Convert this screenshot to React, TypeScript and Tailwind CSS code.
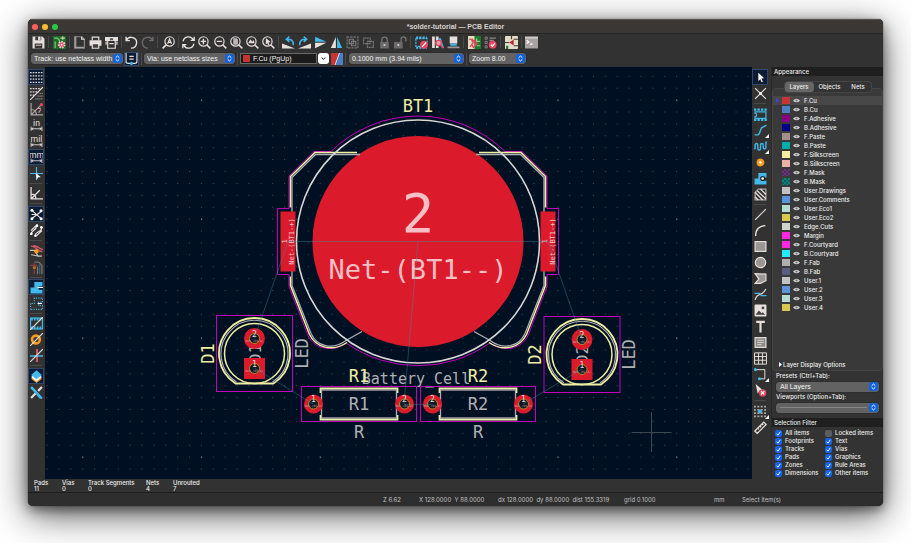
import type { ReactNode } from "react";

const INK = "#e6dfdc";
const BLUE = "#42b8eb";
const DIM = "#6b6969";

/* ---------- shared pieces ---------- */

function Glyph({ children }: { children: ReactNode }) {
  return (
    <svg viewBox="0 0 12 12" className="size-[13px]" fill="none" stroke={INK} strokeWidth="1.1" aria-hidden="true">
      {children}
    </svg>
  );
}

type Tool = { label: string; art?: ReactNode; active?: boolean; more?: boolean; sep?: "s" | "l" };

function ToolButton({ tool }: { tool: Tool }) {
  return (
    <button
      type="button"
      aria-label={tool.label}
      className={
        "relative flex size-4 shrink-0 items-center justify-center " +
        (tool.active ? "bg-[#0d1b33] outline outline-1 -outline-offset-1 outline-[#30486c]" : "")
      }
    >
      <Glyph>{tool.art}</Glyph>
      {tool.more && (
        <svg viewBox="0 0 4 4" className="absolute -right-px bottom-0 size-1" aria-hidden="true">
          <path d="M4 0V4H0Z" fill="#fff" />
        </svg>
      )}
    </button>
  );
}

function HSep({ large }: { large?: boolean }) {
  return (
    <span className={"flex h-4 shrink-0 justify-center py-0.5 " + (large ? "w-[5px]" : "w-1")}>
      <span className="w-px bg-[#4a4a4a]" />
    </span>
  );
}

function VSep({ large }: { large?: boolean }) {
  return (
    <span className={"flex w-4 shrink-0 items-center px-0.5 " + (large ? "h-[5px]" : "h-1")}>
      <span className="h-px w-full bg-[#4a4a4a]" />
    </span>
  );
}

function Chevrons() {
  return (
    <span className="pointer-events-none absolute inset-y-0 right-px flex items-center">
      <svg viewBox="0 0 9 9" className="size-[9px]" fill="none" stroke="#fff" aria-hidden="true">
        <rect width="9" height="9" rx="2" fill="#1263dc" stroke="none" />
        <path d="M2.7 3.7 4.5 2 6.3 3.7M2.7 5.3 4.5 7 6.3 5.3" />
      </svg>
    </span>
  );
}

function Picker({ label, value, width }: { label: string; value: string; width: string }) {
  return (
    <span className={"relative flex h-[11px] " + width}>
      <select
        aria-label={label}
        className="h-full w-full appearance-none rounded-[3px] bg-[#626262] pl-[3px] font-['Liberation_Sans',sans-serif] text-[7px] leading-[11px] text-[#f4f4f4] shadow-[0_0_1px_#000]"
      >
        <option>{value}</option>
      </select>
      <Chevrons />
    </span>
  );
}

/* ---------- tool artwork ---------- */

const lens = <path d="M8 8 11.4 11.4" strokeWidth="1.4" />;
const chipArt = (
  <>
    <rect x="0.8" y="2.5" width="10.4" height="7" stroke={BLUE} strokeDasharray="2 1" />
    <path d="M1 1.5H11M1 10.7H11" stroke={BLUE} strokeWidth="2" strokeDasharray="2 1" />
  </>
);
const padlock = <rect x="2" y="5.5" width="8" height="6" fill={DIM} stroke="none" />;
const zoneShape = "M.5 11.5V6H4V1H11.5V5H8V8H11.5V11.5Z";

const topTools: Tool[] = [
  {
    label: "Save",
    art: (
      <>
        <path d="M.5.5H9.5L11.5 2.5V11.5H.5Z" fill={INK} stroke="none" />
        <path d="M3 .5H8.5V4H3ZM2.5 7H9.5V11.5H2.5Z" fill="#3a3838" stroke="none" />
        <path d="M6 1H7.5V3.5H6ZM3.5 8.5H8.5" fill={INK} strokeWidth=".8" />
      </>
    ),
  },
  {
    label: "Board Setup",
    sep: "l",
    art: (
      <>
        <rect width="12" height="12" fill="#1f6b2a" stroke="none" />
        <path d="M1 2H4L6 4V8M2 5V11M9 0V4" stroke="#7fc47d" />
        <path d="M7 2H11" stroke="#e2d7a5" />
        <circle cx="8" cy="8" r="2.6" fill="#e8536b" stroke="#f0c5ca" strokeWidth="1.8" strokeDasharray="1.4 .9" />
        <circle cx="8" cy="8" r="1.6" fill="#e8536b" stroke="none" />
        <circle cx="8" cy="8" r=".8" fill="#fff" stroke="none" />
      </>
    ),
  },
  { label: "Page Settings", sep: "s", art: <><path d="M1.5.7H8L10.5 3V11.3H1.5Z" stroke="#8b8785" /><path d="M2.5.5V11M1.5 10.5H10" stroke="#a9a3a1" /><path d="M8 .7V3H10.5" stroke={INK} /></> },
  { label: "Print", art: <><path d="M3 4V1H9V4" /><path d="M.5 4H11.5V9H.5Z" fill={INK} stroke="none" /><path d="M3 7H9V11.3H3Z" fill="#444" /></> },
  { label: "Plot", art: <><path d="M0 1H12V4.5H0Z" fill={INK} stroke="none" /><path d="M2.5 4V11.3H9.5V4M1 8V5M11 8V5M4 7H8" /><path d="M4.5 2H7.5V4H4.5Z" fill="#555" stroke="none" /></> },
  { label: "Undo", sep: "s", art: <path d="M1 .8V4.3H4.5M1.2 4A5 5 0 1 1 5.5 11.2" strokeWidth="1.3" /> },
  { label: "Redo", art: <path d="M11 .8V4.3H7.5M10.8 4A5 5 0 1 0 6.5 11.2" strokeWidth="1.3" stroke={DIM} /> },
  { label: "Find", sep: "l", art: <><circle cx="7" cy="5" r="4.3" /><path d="M3.8 8.2.6 11.4" strokeWidth="1.6" /><path d="M5.2 7.2 7 2.8 8.8 7.2M5.8 5.8H8.2" /></> },
  { label: "Refresh", sep: "s", art: <path d="M1 5A5 5 0 0 1 10.5 3.8M11.3.8V4H8M11 7A5 5 0 0 1 1.5 8.2M.7 11.2V8H4" strokeWidth="1.2" /> },
  { label: "Zoom In", art: <><circle cx="5" cy="5" r="4.3" />{lens}<path d="M2.5 5H7.5M5 2.5V7.5" strokeWidth="1.3" /></> },
  { label: "Zoom Out", art: <><circle cx="5" cy="5" r="4.3" />{lens}<path d="M2.5 5H7.5" strokeWidth="1.3" /></> },
  { label: "Zoom to Page", art: <><circle cx="5" cy="5" r="4.3" />{lens}<path d="M3 2H6L7.3 3.3V8H3Z" fill="#bdb6b3" stroke="none" /></> },
  { label: "Zoom to Objects", art: <><circle cx="5" cy="5" r="4.3" />{lens}<path d="M2 6.8 4.2 3 5.6 5.2 7 3.8 8 6.8Z" fill={INK} stroke="none" /></> },
  { label: "Zoom to Selection", art: <><circle cx="5" cy="5" r="4.3" />{lens}<path d="M3.5 1.8 8 5.5 6 6 7 8.2 5.7 8.5 5 6.6 3.5 7.8Z" fill={INK} stroke="none" /></> },
  { label: "Rotate Counterclockwise", sep: "s", art: <><path d="M0 11.5V7L12 11.5Z" fill={INK} stroke="none" /><path d="M10.5 8.5C10.5 4 8 2.5 4.5 3M6.8.6 4 3 6.8 5.4" stroke={BLUE} strokeWidth="1.4" /></> },
  { label: "Rotate Clockwise", art: <><path d="M12 11.5V7L0 11.5Z" fill={INK} stroke="none" /><path d="M1.5 8.5C1.5 4 4 2.5 7.5 3M5.2.6 8 3 5.2 5.4" stroke={BLUE} strokeWidth="1.4" /></> },
  { label: "Mirror Vertically", art: <><path d="M1 .8V5.4H11.5Z" fill={BLUE} stroke="none" /><path d="M1 11.2V6.2H11.5Z" fill={INK} stroke="none" /></> },
  { label: "Mirror Horizontally", art: <><path d="M.8 11H5.4V1Z" fill={INK} stroke="none" /><path d="M11.2 11H6.6V1Z" fill={BLUE} stroke="none" /></> },
  { label: "Group", art: <g stroke="#777"><rect x="1" y="1" width="10" height="10" strokeDasharray="2 1" /><path d="M3 3H7V7H3ZM5 5H9V9H5Z" /></g> },
  { label: "Ungroup", art: <g stroke="#777"><path d="M1.5 2H7.5V7H1.5ZM5 5H10.5V10.5H5Z" strokeDasharray="2 .7" /></g> },
  { label: "Lock", art: <>{padlock}<path d="M3.5 6V3.5A2.5 2.5 0 0 1 8.5 3.5V6" stroke="#777" strokeWidth="1.2" /><circle cx="6" cy="8.3" r="1" fill="#ccc" stroke="none" /></> },
  { label: "Unlock", art: <><rect x="0" y="5.5" width="8" height="6" fill={DIM} stroke="none" /><path d="M6.5 6V3A2.2 2.2 0 0 1 11 3V5" stroke="#777" strokeWidth="1.2" /><circle cx="4" cy="8.3" r="1" fill="#ccc" stroke="none" /></> },
  { label: "Footprint Editor", sep: "l", art: <>{chipArt}<circle cx="8.3" cy="8" r="3.6" fill="#e84560" stroke="none" /><path d="M6.5 10 10.3 6" stroke="#fff" /></> },
  { label: "Footprint Browser", art: <><path d="M1 .5H3.5V11H1ZM4.5.5H7V11H4.5Z" fill={INK} stroke="none" /><path d="M8 2 11 11" stroke={BLUE} strokeWidth="2" /><circle cx="7" cy="6.5" r="2.5" fill="#f0a0ac" stroke="#e84560" /><path d="M9 8.5 11.5 11.3" stroke="#e84560" strokeWidth="1.4" /></> },
  { label: "3D Viewer", art: <><path d="M2.5.5H9.5V7H2.5Z" fill={INK} stroke="none" /><path d="M3 8H9" stroke={BLUE} strokeWidth="2" /><path d="M.5 10.5H11.5" stroke="#999" strokeWidth="1.4" /></> },
  {
    label: "Update PCB from Schematic",
    sep: "l",
    art: (
      <>
        <rect width="7" height="12" fill="#e4dcc0" stroke="none" />
        <rect x="6" width="6" height="12" fill="#1f7a2d" stroke="none" />
        <path d="M1 3H4V6" stroke="#b9483f" />
        <path d="M8 2V5H11M8 9H11" stroke="#8fd08c" />
        <path d="M2 10 6 4.5M6.5 7.5V4H3M3 7.5 5 10.5 9 6" stroke="#e84560" strokeWidth="1.3" />
      </>
    ),
  },
  { label: "Design Rules Checker", art: <><path d="M1 1H3V3H1ZM1 5H3V7H1ZM1 9H3V11H1Z" stroke="#8d8987" strokeWidth=".8" /><path d="M5 2H11M5 4H9" stroke="#8d8987" /><circle cx="8" cy="8" r="3.6" fill="#e84560" stroke="none" /><path d="M6.300 8 7.600 9.500 10 6.700" stroke="#fff" /></> },
  { label: "Schematic Editor", sep: "l", art: <><rect width="12" height="12" rx="1" fill="#e4dcc8" stroke="none" /><path d="M0 6H4M8 3H12M8 9H12M6 0V3" stroke="#3d3a38" /><path d="M4 6 8 3.2V8.8Z" fill="#b72a2f" stroke="none" /><path d="M2 9V12" stroke="#237a2c" strokeWidth="2" /></> },
  { label: "Scripting Console", sep: "s", art: <><rect x="0" y=".5" width="12" height="11" fill="#a8a3a1" stroke="none" /><path d="M0 1.500H12" stroke="#d0cac8" strokeWidth="1.5" /><path d="M1.5 4 3.5 5.5 1.5 7M4.5 7.5H7" stroke="#fff" /></> },
];

const unitText = (t: string) => (
  <>
    <text x="6" y="6.5" textAnchor="middle" fontSize="8" fill={INK} stroke="none" fontFamily="Roboto, sans-serif">
      {t}
    </text>
    <path d="M1 9H11M1 7V11M11 7V11M3 8 1.6 9 3 10M9 8 10.4 9 9 10" strokeWidth=".8" />
  </>
);

const leftTools: Tool[] = [
  { label: "Show Grid", active: true, art: <path d="M0 1.5H12M0 4.5H12M0 7.5H12M0 10.5H12" strokeDasharray="1.5 1" /> },
  { label: "Grid Overrides", art: <><path d="M0 1.5H11M0 4.5H8M0 7.5H5" strokeDasharray="1.5 1" /><path d="M0 12 12 0" /><path d="M5 11H12M7 8.5H12M9 6H12" stroke="#9b9694" strokeDasharray="1 .8" /></> },
  { label: "Polar Coordinates", art: <><path d="M1 0V11H12M1 11 10 2M1 6C4 6 6 8 6 11" stroke="#aaa5a3" /><circle cx="10.5" cy="1.5" r="1.5" fill="#e84560" stroke="none" /><path d="M7 5H10M8 9 10 6" stroke="#d8909a" /></> },
  { label: "Inches", art: unitText("in") },
  { label: "Mils", art: unitText("mil") },
  { label: "Millimeters", active: true, art: unitText("mm") },
  { label: "Full Crosshair", art: <><path d="M6 0V12M0 6H12" stroke={BLUE} /><path d="M5.2 5.2 10 9.4H7.6L6.3 11.5Z" fill="#fff" stroke="none" /></> },
  { label: "45 Degree Limit", sep: "s", art: <path d="M1 0V11H12M1 11 9 3M1 6.5C4 6.5 5.5 8 5.5 11" strokeWidth="1.2" /> },
  { label: "Show Ratsnest", sep: "l", active: true, art: <><path d="M1.5 2 10.5 10M1.5 10 10.5 3M5.5 6H1.5" /><g fill="#fff" stroke="none"><circle cx="1.8" cy="2" r="1.4" /><circle cx="10.2" cy="2.5" r="1.4" /><circle cx="1.8" cy="10" r="1.4" /><circle cx="10.3" cy="10" r="1.4" /></g></> },
  { label: "Curved Ratsnest", art: <><path d="M1 10C0 6 7 6 6 1M5 11C4 7 11 8 11 3M1 6 6 1M6 11 11 6" /><g fill="#fff" stroke="none"><circle cx="6.5" cy="1.5" r="1.2" /><circle cx="10.5" cy="3" r="1.2" /><circle cx="1.3" cy="9" r="1.2" /><circle cx="5" cy="10.8" r="1.2" /></g></> },
  { label: "Highlight Nets", sep: "l", art: <><path d="M1 1C6 1 6 6 11.5 6M3 .5C8 1 8 4 12 4" stroke="#d65868" strokeWidth="1.3" /><path d="M0 5H4L8 11M1 9C5 9 6 11 11 10" stroke="#c7c0bd" /><circle cx="6" cy="6" r="2" fill="#f59b1e" stroke="none" /></> },
  { label: "Net Colors", art: <><path d="M0 4H7M4 2V12" stroke="#8a3a43" strokeWidth="1.2" /><path d="M4 1H8L11 4V12M7 5V12" stroke="#777371" strokeWidth="1.2" /><path d="M9 3V12" stroke="#2f6a86" /><circle cx="4" cy="6" r="1.5" fill="#bb6c1a" stroke="none" /></> },
  { label: "Filled Zones", sep: "s", active: true, art: <><path d={zoneShape} fill={BLUE} stroke="none" /><path d="M7 6H12" stroke="#fff" /></> },
  { label: "Zone Outlines", art: <><path d={zoneShape} stroke={BLUE} strokeDasharray="1 1.2" /><path d="M7 6H11" stroke="#fff" /></> },
  { label: "Outline Footprints", sep: "s", art: <><rect x=".5" y="1" width="11" height="10" stroke={BLUE} /><path d="M1 2H11M1 10H11" stroke={BLUE} strokeWidth="2.5" strokeDasharray="1.6 1" /><path d="M0 12 12 0" /></> },
  { label: "Outline Vias", art: <><circle cx="5.5" cy="6" r="3.6" stroke="#f59b1e" strokeWidth="2.4" /><path d="M0 12 12 0" /></> },
  { label: "Outline Tracks", art: <><path d="M6.5 0V12" stroke="#d65868" strokeWidth="1.8" /><path d="M0 6.5H12" stroke={BLUE} strokeWidth="1.4" /><path d="M0 12 12 0" /></> },
  { label: "High Contrast", sep: "l", active: true, art: <><path d="M6 4.5 11 8 6 12 1 8Z" fill="#f59b1e" stroke="none" /><path d="M6 2.5 11 6.5 6 10.5 1 6.5Z" fill="#fff" stroke="none" /><path d="M6 .3 11 4.5 6 8.5 1 4.5Z" fill={BLUE} stroke="none" /></> },
  { label: "Preferences", art: <><path d="M1 1 4 4 10 11" stroke={BLUE} strokeWidth="2.4" /><path d="M11 1 7.5 4.5M5 7 1 11" stroke={INK} strokeWidth="2" /><path d="M7 8 11 11.5" stroke={BLUE} strokeWidth="2" /></> },
];

const rightTools: Tool[] = [
  { label: "Select", active: true, art: <path d="M4 1.500 9.300 6.600 6.900 6.900 8.200 9.900 7 10.400 5.800 7.500 4 9.200Z" fill="#fff" stroke="none" /> },
  { label: "Local Ratsnest", art: <><path d="M1 1 11 11M11 1 1 11" /><circle cx="6" cy="6" r="1.2" fill="#fff" stroke="none" /></> },
  { label: "Add Footprint", sep: "l", art: <><path d="M1 3.5H11V9.5H1V8A1.5 1.5 0 0 0 1 5Z" stroke={BLUE} /><path d="M0 1.5H12M0 11H12" stroke={BLUE} strokeWidth="2" strokeDasharray="2.2 1" /></> },
  { label: "Route Tracks", more: true, art: <path d="M.5 10H3.500C6 10 5.500 3 8 3L11.500 1" stroke={BLUE} strokeWidth="1.3" /> },
  { label: "Tune Length", more: true, art: <path d="M0 8H1V4.5A1.2 1.2 0 0 1 3.5 4.5V8A1.2 1.2 0 0 0 6 8V4.5A1.2 1.2 0 0 1 8.5 4.5V7A1.2 1.2 0 0 0 11 7V2H12" stroke={BLUE} strokeWidth="1.3" /> },
  { label: "Add Via", art: <circle cx="6" cy="6" r="2.4" fill="#fff" stroke="#f59b1e" strokeWidth="2.4" /> },
  { label: "Add Zone", art: <><path d={zoneShape} fill={BLUE} stroke="none" /><circle cx="8" cy="6" r="1.8" fill="#fff" stroke="#222" /></> },
  { label: "Add Rule Area", art: <><path d="M1 4 4 1H11V11H1Z" stroke="#aaa5a3" /><path d="M1 4 8 11M3 2.5 11 10M6 1 11 6M1 8 4 11" strokeWidth="1.2" /></> },
  { label: "Draw Line", sep: "s", art: <path d="M1 11 11 1" strokeWidth="1.1" /> },
  { label: "Draw Arc", art: <path d="M1.5 11C1.5 5 5 1.5 10.5 1.5" strokeWidth="1.3" /> },
  { label: "Draw Rectangle", art: <rect x="1" y="1.5" width="10" height="9" fill="#9a9694" /> },
  { label: "Draw Circle", art: <circle cx="6" cy="6" r="4.8" fill="#9a9694" /> },
  { label: "Draw Polygon", art: <path d="M1 1.5 11 2V8L6 10.5H1L4.5 6.5Z" fill="#9a9694" /> },
  { label: "Draw Bezier", art: <><path d="M1 11C3 3 7 9 11 1" /><path d="M.5 5H6M6 7H11.5" stroke={BLUE} /></> },
  { label: "Add Image", art: <><rect x=".5" y=".5" width="11" height="11" rx="1" fill={INK} stroke="none" /><path d="M1.5 10 4.5 6 7 8.5 8 7.5 10.5 10Z" fill="#444" stroke="none" /><circle cx="8.3" cy="3.6" r="1.3" fill="#444" stroke="none" /></> },
  { label: "Add Text", art: <path d="M2 1.800H10M6 1.800V11.500" strokeWidth="2" /> },
  { label: "Add Text Box", art: <><rect x="1" y="1.5" width="10" height="9" fill="#8d8987" /><path d="M3 4H9M3 6H9M3 8H7" strokeWidth=".8" /></> },
  { label: "Add Table", art: <path d="M.5.8H11.5V11.2H.5ZM.5 4.2H11.5M.5 7.6H11.5M4.2.8V11.2M7.8.8V11.2" strokeWidth=".9" /> },
  { label: "Add Dimension", more: true, art: <><path d="M1 1.5H10V10H5" strokeWidth=".9" /><circle cx="1.2" cy="1.5" r="1.4" fill={BLUE} stroke="none" /><circle cx="5" cy="10" r="1.4" fill={BLUE} stroke="none" /></> },
  { label: "Delete", art: <><path d="M1.5 0 8 5.5 5 6 3.5 9Z" fill={INK} stroke="none" /><circle cx="8" cy="8.2" r="3.4" fill="#e84560" stroke="none" /><path d="M6.5 6.7 9.5 9.7M9.5 6.7 6.5 9.7" stroke="#fff" /></> },
  { label: "Set Grid Origin", sep: "l", more: true, art: <><path d="M0 1.5H12M0 4.5H12M0 7.5H12M0 10.5H12" stroke="#aaa5a3" strokeWidth="1.8" strokeDasharray="1.8 1.3" /><circle cx="5.5" cy="6" r="1.9" fill={BLUE} stroke="none" /></> },
  { label: "Measure", art: <path d="M.8 9.3 9 1 11.2 3.2 3 11.4ZM3.5 6.6 4.6 7.7M5.5 4.6 6.6 5.7M7.4 2.6 8.5 3.7" strokeWidth="1.2" /> },
];

/* ---------- board drawing ---------- */

const SILK = "#f0eea1";
const FAB = "#afb0b4";
const YARD = "#c400c0";
const RED = "#db1b2b";
const BOARD = "#001023";
const MONO = "'DejaVu Sans Mono', monospace";

function RoundPad({ x, y, r, n, square }: { x: number; y: number; r: number; n: string; square?: boolean }) {
  return (
    <g>
      {square ? (
        <rect x={x - r} y={y - r} width={r * 2} height={r * 2} fill={RED} />
      ) : (
        <circle cx={x} cy={y} r={r} fill={RED} />
      )}
      <circle cx={x} cy={y} r="5" fill="#0b1a28" stroke="#b08a1c" strokeWidth="1" />
      <text x={x} y={y - 2} fontSize="8" fill="#f6dcdf" textAnchor="middle">{n}</text>
      <text x={x} y={y + 3} fontSize="3" fill="#d99aa4" textAnchor="middle">Net-(D1-A)</text>
    </g>
  );
}

function Resistor({ x, name, left, right }: { x: number; name: string; left: string; right: string }) {
  return (
    <g transform={`translate(${x} 404)`}>
      <rect x="-57.5" y="-17.5" width="115" height="35" fill="none" stroke={YARD} />
      <path d="M-38.5-11V-15.5H38.5V-11M-38.5 11V15.5H38.5V11" fill="none" stroke={SILK} strokeWidth="1.8" />
      <rect x="-37.5" y="-14" width="75" height="28" fill="none" stroke={FAB} strokeWidth="1.3" />
      <RoundPad x={-45.5} y={0} r={9.5} n={left} />
      <RoundPad x={45.5} y={0} r={9.5} n={right} />
      <text y="6" fontSize="17" fill={FAB} textAnchor="middle">{name}</text>
      <text y="34" fontSize="17" fill={FAB} textAnchor="middle">R</text>
      <text y="-22" fontSize="17" fill={SILK} textAnchor="middle">{name}</text>
    </g>
  );
}

function Led({ x, y, name }: { x: number; y: number; name: string }) {
  return (
    <g transform={`translate(${x} ${y})`}>
      <rect x="-38" y="-38" width="76" height="76" fill="none" stroke={YARD} />
      <path d="M-19 30A35.5 35.5 0 1 1 19 30Z" fill="none" stroke={SILK} strokeWidth="1.8" />
      <path d="M-18 28.5A33.5 33.5 0 1 1 18 28.5" fill="none" stroke={FAB} strokeWidth="1.2" />
      <circle r="30" fill="none" stroke={SILK} strokeWidth="1.5" />
      <text transform="translate(6 0) rotate(-90)" fontSize="16" fill={FAB} textAnchor="middle">{name}</text>
      <RoundPad x={0} y={-15} r={10.5} n="2" />
      <RoundPad x={0} y={15} r={10.5} n="1" square />
      <text transform="translate(-41 0) rotate(-90)" fontSize="17" fill={SILK} textAnchor="middle">{name}</text>
      <text transform="translate(53 0) rotate(-90)" fontSize="17" fill={FAB} textAnchor="middle">LED</text>
    </g>
  );
}

function HolderSide() {
  return (
    <g fill="none">
      <path d="M-87-90H-104L-129-65.5V-33H-140.5V33H-129V45L-110 94C-104 107-86 112-71 101" stroke={YARD} />
      <path d="M-58-87H-102.500L-126-64V44L-107 92C-101 105-86 109-72 99L-56 90" stroke={FAB} strokeWidth="1.3" />
      <path d="M-61-89H-103L-127.500-65V-34M-127.500 35V44L-108.500 93C-102 106-86 111-71 101" stroke={SILK} strokeWidth="1.5" />
      <rect x="-137.500" y="-30" width="15" height="60" fill={RED} />
    </g>
  );
}

function Board() {
  return (
    <svg
      viewBox="45 67 707 412"
      preserveAspectRatio="xMidYMid slice"
      className="block h-full w-full"
      role="img"
      aria-label="Board layout"
      fontFamily={MONO}
    >
      <defs>
        <pattern id="dots" x="46.500" y="75.800" width="11.880" height="11.900" patternUnits="userSpaceOnUse">
          <rect width="1" height="1" fill="#3c4856" />
        </pattern>
        <pattern id="dotsMajor" x="82.200" y="99.600" width="118.800" height="119" patternUnits="userSpaceOnUse">
          <rect width="1.200" height="1.200" fill="#7d8894" />
        </pattern>
      </defs>
      <rect x="-500" y="-500" width="2000" height="2000" fill={BOARD} />
      <rect x="-500" y="-500" width="2000" height="2000" fill="url(#dots)" />
      <rect x="-500" y="-500" width="2000" height="2000" fill="url(#dotsMajor)" />

      <path d="M651.500 412V452M631.500 432.500H671.500" stroke="#3c4754" />

      <g transform="translate(418 241.500)">
        <circle r="105.500" fill={RED} />
        <path d="M-87-90A124.500 124.500 0 0 1 87-90M-71 102A124.500 124.500 0 0 0 71 102" fill="none" stroke={YARD} />
        <HolderSide />
        <g transform="scale(-1 1)">
          <HolderSide />
        </g>
        <circle r="121.500" fill="none" stroke="#d8d9d6" strokeWidth="1.600" />
        <text y="-10" fontSize="54" fill="#f7bfc4" textAnchor="middle">2</text>
        <text y="37" fontSize="27" fill="#f7bfc4" textAnchor="middle">Net-(BT1--)</text>
        <text y="-130" fontSize="17" fill={SILK} textAnchor="middle">BT1</text>
        <text x="-2" y="142" fontSize="15" fill={FAB} textAnchor="middle">Battery_Cell</text>
        <g fontSize="7" fill="#f7c9cd" textAnchor="middle">
          <text transform="translate(-131 0) rotate(-90)">1</text>
          <text transform="translate(-124 0) rotate(-90)">Net-(BT1-+)</text>
          <text transform="translate(129 0) rotate(-90)">1</text>
          <text transform="translate(137 0) rotate(-90)">Net-(BT1-+)</text>
        </g>
      </g>

      <Led x={254.5} y={353.5} name="D1" />
      <Led x={582} y={354.5} name="D2" />
      <Resistor x={359} name="R1" left="1" right="2" />
      <Resistor x={478} name="R2" left="2" right="1" />

      <g stroke="#3f8f9c" strokeOpacity=".45" strokeWidth=".9">
        <path d="M288 241.500H548M418 241.500 404 404M288 241.500 254.500 338M548 241.500 582 339M254.500 368 313 404M523 404 582 369M404 404.500H432" />
      </g>
    </svg>
  );
}

/* ---------- appearance panel ---------- */

const layers: [string, string][] = [
  ["F.Cu", "bg-[#c83434]"],
  ["B.Cu", "bg-[#4d7fc4]"],
  ["F.Adhesive", "bg-[#840084]"],
  ["B.Adhesive", "bg-[#000084]"],
  ["F.Paste", "bg-[#a39189]"],
  ["B.Paste", "bg-[#00adad]"],
  ["F.Silkscreen", "bg-[#f2eda1]"],
  ["B.Silkscreen", "bg-[#e8b2a7]"],
  ["F.Mask", "bg-[repeating-conic-gradient(#6d3579_0_25%,#4b2a5c_0_50%)] bg-size-[4px_4px]"],
  ["B.Mask", "bg-[repeating-conic-gradient(#14807a_0_25%,#0d5f5b_0_50%)] bg-size-[4px_4px]"],
  ["User.Drawings", "bg-[#c2c2c2]"],
  ["User.Comments", "bg-[#5994dc]"],
  ["User.Eco1", "bg-[#b4dbd2]"],
  ["User.Eco2", "bg-[#d8c852]"],
  ["Edge.Cuts", "bg-[#d0d2cd]"],
  ["Margin", "bg-[#ff26e2]"],
  ["F.Courtyard", "bg-[#ff26e2]"],
  ["B.Courtyard", "bg-[#26e9ff]"],
  ["F.Fab", "bg-[#afafaf]"],
  ["B.Fab", "bg-[#585d84]"],
  ["User.1", "bg-[#c2c2c2]"],
  ["User.2", "bg-[#5994dc]"],
  ["User.3", "bg-[#b4dbd2]"],
  ["User.4", "bg-[#d8c852]"],
];

const filters: [string, boolean][] = [
  ["All items", true],
  ["Locked items", false],
  ["Footprints", true],
  ["Text", true],
  ["Tracks", true],
  ["Vias", true],
  ["Pads", true],
  ["Graphics", true],
  ["Zones", true],
  ["Rule Areas", true],
  ["Dimensions", true],
  ["Other items", true],
];

function PanelSelect({ id, label, value }: { id: string; label: string; value: string }) {
  return (
    <div className="px-1">
      <label htmlFor={id} className="block h-[10px] leading-[10px]">{label}</label>
      <span className="relative flex h-[11px] w-full items-center">
        <select
          id={id}
          className="h-[10px] w-full appearance-none rounded-[3px] bg-[#626262] pl-1 font-['Liberation_Sans',sans-serif] text-[7px] leading-[10px] text-[#f4f4f4] shadow-[0_0_1px_#000]"
        >
          <option>{value}</option>
        </select>
        {value === "" && <span className="pointer-events-none absolute right-3 left-1 h-px bg-[#858585]" />}
        <Chevrons />
      </span>
    </div>
  );
}

function Panel() {
  return (
    <aside className="flex w-28 shrink-0 flex-col border-l border-[#2a2a2a] bg-[#333] text-[6px] font-medium text-[#ececec]">
      <h2 className="h-[9px] bg-[#1f1f1f] pl-0.5 leading-[9px]">Appearance</h2>
      <div className="flex min-h-0 flex-1 flex-col pt-1.5">
        <div role="tablist" className="z-10 -mb-1 flex h-[10px] w-[86px] self-center rounded-[3px] bg-[#333] leading-[10px] ring-1 ring-[#444]">
          <button role="tab" aria-selected="true" type="button" className="w-[29px] rounded-[3px] bg-[#666]">Layers</button>
          <button role="tab" aria-selected="false" type="button" className="w-[32px]">Objects</button>
          <button role="tab" aria-selected="false" type="button" className="flex-1">Nets</button>
        </div>
        <div className="flex flex-1 flex-col rounded-sm border border-[#444] bg-[#393939] pt-[7px]">
          <ul className="flex-1">
            {layers.map(([name, color], i) => (
              <li key={name} className={"flex h-[9px] items-center pl-[3px] leading-[9px] " + (i === 0 ? "bg-[#484848]" : "")}>
                <svg viewBox="0 0 3 5" className="mr-[3px] h-[5px] w-[3px]" aria-hidden="true">
                  {i === 0 && <path d="M0 0 3 2.500 0 5Z" fill="#3f3fff" />}
                </svg>
                <span className={"mr-[3px] h-[7px] w-2 " + color} />
                <button type="button" aria-label={"Toggle " + name} className="mr-1 flex">
                  <svg viewBox="0 0 7 5" className="h-[5px] w-[7px]" aria-hidden="true">
                    <path d="M0 2.500Q3.500-1.200 7 2.500Q3.500 6.200 0 2.500Z" fill="#d2d2d2" />
                    <circle cx="3.500" cy="2.500" r="1.100" fill="#777" />
                  </svg>
                </button>
                {name}
              </li>
            ))}
          </ul>
          <button type="button" className="flex h-3 items-center gap-px pl-[6px] text-left">
            <svg viewBox="0 0 3 5" className="h-[5px] w-[3px]" aria-hidden="true">
              <path d="M0 0 3 2.500 0 5Z" fill="#fff" />
            </svg>
            Layer Display Options
          </button>
        </div>
        <PanelSelect id="presets" label="Presets (Ctrl+Tab):" value="All Layers" />
        <PanelSelect id="viewports" label="Viewports (Option+Tab):" value="" />
      </div>
      <h2 className="mt-[5px] h-[9px] bg-[#1f1f1f] pl-0.5 leading-[9px]">Selection Filter</h2>
      <div className="grid grid-cols-[50px_1fr] pt-[2px] pb-[2px] pl-[3px]">
        {filters.map(([name, on]) => (
          <label key={name} className="relative flex h-2 items-center gap-[3px] leading-[8px]">
            <input type="checkbox" defaultChecked={on} className="peer size-[7px] appearance-none rounded-[2px] bg-[#5c5c5c] checked:bg-[#1263e6]" />
            <svg viewBox="0 0 7 7" className="pointer-events-none absolute left-0 hidden size-[7px] peer-checked:block" aria-hidden="true">
              <path d="M1.700 3.700 3 5.200 5.300 1.800" fill="none" stroke="#fff" />
            </svg>
            {name}
          </label>
        ))}
      </div>
    </aside>
  );
}

/* ---------- window ---------- */

const stats = [
  ["Pads", "11"],
  ["Vias", "0"],
  ["Track Segments", "0"],
  ["Nets", "4"],
  ["Unrouted", "7"],
];

export default function App() {
  return (
    <div className="flex h-screen min-h-[540px] flex-col bg-white px-7 pt-[19px] pb-[37px] font-[Inter,sans-serif]">
      <main className="flex min-h-0 flex-1 flex-col overflow-hidden rounded-[5px] bg-[#323232] shadow-[0_9px_36px_rgba(0,0,0,0.65),0_4px_12px_rgba(0,0,0,0.45),0_0_1px_#000]">
        <header className="flex h-[14px] shrink-0 items-center border-t border-[#5a5654] bg-[#3b3735] px-1">
          <div className="flex flex-1 gap-1">
            <button type="button" aria-label="Close" className="size-1.5 rounded-full bg-[#ff5f57]" />
            <button type="button" aria-label="Minimize" className="size-1.5 rounded-full bg-[#febc2e]" />
            <button type="button" aria-label="Full Screen" className="size-1.5 rounded-full bg-[#28c840]" />
          </div>
          <h1 className="font-['Liberation_Sans',sans-serif] text-[7px] leading-[12px] font-bold text-[#d6d2d0]">*solder-tutorial — PCB Editor</h1>
          <div className="flex-1" />
        </header>

        <div className="flex h-[17px] shrink-0 items-center border-t border-[#252525] pl-0.5">
          {topTools.map((t) => (
            <div key={t.label} className="flex">
              {t.sep && <HSep large={t.sep === "l"} />}
              <ToolButton tool={t} />
            </div>
          ))}
        </div>

        <div className="flex h-[17px] shrink-0 items-center pl-[3px]">
          <Picker label="Track width" value="Track: use netclass width" width="w-[92px]" />
          <button type="button" aria-label="Automatic track width" className="ml-px flex h-[14px] w-[15px] items-center justify-center bg-[#0d1b33] outline outline-1 -outline-offset-1 outline-[#30486c]">
            <Glyph>
              <path d="M1 0V9Q1 10.500 3 10.500H9Q11 10.500 11 9V0M4 4H8M4 6.500H8" />
              <circle cx="6" cy="10.500" r="1.400" fill={BLUE} stroke="none" />
            </Glyph>
          </button>
          <HSep large />
          <Picker label="Via size" value="Via: use netclass sizes" width="w-[91px]" />
          <HSep large />
          <span className="relative flex h-[11px] items-center">
            <select aria-label="Active layer" className="h-[11px] w-[77px] appearance-none border border-[#686868] bg-[#1c1c1c] pl-3 font-['Liberation_Sans',sans-serif] text-[7px] leading-[9px] text-[#f4f4f4]">
              <option>F.Cu (PgUp)</option>
            </select>
            <span className="pointer-events-none absolute left-[3px] size-[7px] bg-[#c83434]" />
            <span className="pointer-events-none ml-px flex h-[11px] w-[11px] items-center justify-center rounded-[3px] bg-white">
              <svg viewBox="0 0 5 5" className="size-[5px]" fill="none" stroke="#222" aria-hidden="true">
                <path d="M.7 1.500 2.500 3.500 4.300 1.500" />
              </svg>
            </span>
          </span>
          <button type="button" aria-label="Layer pair" className="ml-0.5 flex">
            <svg viewBox="0 0 12 12" className="size-3" aria-hidden="true">
              <rect width="12" height="12" fill="#4d7fc4" />
              <path d="M0 0H8L4 12H0Z" fill="#c83434" />
              <path d="M8.500 0 4 12" stroke="#ddd" />
            </svg>
          </button>
          <HSep large />
          <span className="w-px" />
          <Picker label="Grid" value="0.1000 mm (3.94 mils)" width="w-[115px]" />
          <HSep large />
          <Picker label="Zoom" value="Zoom 8.00" width="w-[57px]" />
        </div>

        <div className="flex min-h-0 flex-1">
          <nav aria-label="View tools" className="flex w-[17px] shrink-0 flex-col pt-0.5">
            {leftTools.map((t) => (
              <div key={t.label}>
                {t.sep && <VSep large={t.sep === "l"} />}
                <ToolButton tool={t} />
              </div>
            ))}
          </nav>
          <section className="min-w-0 flex-1 overflow-hidden bg-[#001023]">
            <Board />
          </section>
          <nav aria-label="Drawing tools" className="flex w-[19px] shrink-0 flex-col pt-0.5">
            {rightTools.map((t) => (
              <div key={t.label} className="w-4">
                {t.sep && <VSep large={t.sep === "l"} />}
                <ToolButton tool={t} />
              </div>
            ))}
          </nav>
          <Panel />
        </div>

        <dl className="grid h-[13px] shrink-0 grid-cols-[28px_26px_58px_27px_auto] pl-1.5 text-[6px] leading-[7px] font-medium text-[#ececec]">
          {stats.map(([k, v]) => (
            <div key={k}>
              <dt>{k}</dt>
              <dd className="leading-[6px]">{v}</dd>
            </div>
          ))}
        </dl>
        <footer className="grid h-[14px] shrink-0 grid-cols-[355px_36px_79px_126px_90px_28px_1fr] items-center border-t border-[#1e1e1e] bg-[#2e2e2e] text-[6px] whitespace-pre text-[#c0c0c0]">
          <span />
          <span>Z 6.62</span>
          <span>X 128.0000  Y 88.0000</span>
          <span>dx 128.0000  dy 88.0000  dist 155.3319</span>
          <span>grid 0.1000</span>
          <span>mm</span>
          <span>Select item(s)</span>
        </footer>
      </main>
    </div>
  );
}
